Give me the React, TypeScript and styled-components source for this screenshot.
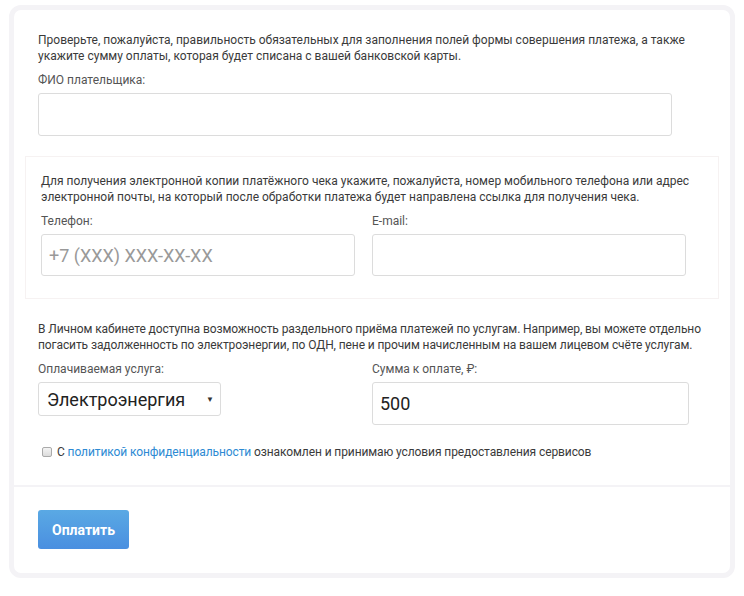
import React from "react";
import styled, { createGlobalStyle } from "styled-components";

const Global = createGlobalStyle`
  html, body { margin: 0; padding: 0; background: #ffffff; }
  body { font-family: Roboto, "Noto Sans", Arial, sans-serif; color: #333; }
  * { box-sizing: border-box; }
`;

const Card = styled.div`
  margin: 5px 9px 0 9px;
  width: 726px;
  height: 573px;
  border: 5px solid #f4f3f6;
  border-radius: 12px;
  background: #fff;
  display: flex;
  flex-direction: column;
`;

const Body = styled.div`
  padding: 22px 11px 0 11px;
  display: flex;
  flex-direction: column;
`;

const Section = styled.div`
  padding: 0 13px;
`;

const Box = styled.div`
  margin-top: 20px;
  border: 1px solid #f6f2f2;
  padding: 16px 31px 22px 15px;
`;

const Text = styled.p<{ $top?: number; $tight?: boolean }>`
  margin: ${(p) => p.$top ?? 0}px 0 0 0;
  font-size: 12px;
  line-height: 16px;
  color: #3a3a3a;
  white-space: nowrap;
  letter-spacing: ${(p) => (p.$tight ? "-0.1px" : "0")};
`;

const Label = styled.div`
  font-size: 12px;
  line-height: 16px;
  color: #555;
  margin-top: 8px;
  margin-bottom: 5px;
`;

const Input = styled.div<{ $w: number; $h?: number }>`
  width: ${(p) => p.$w}px;
  height: ${(p) => p.$h ?? 42}px;
  border: 1px solid #dcdcdc;
  border-radius: 3px;
  background: #fff;
  display: flex;
  align-items: center;
  padding: 0 7px;
  font-size: 18px;
`;

const Placeholder = styled.span`
  color: #999;
  font-size: 18px;
`;

const Value = styled.span`
  color: #222;
  font-size: 18px;
`;

const Row = styled.div`
  display: flex;
`;

const Col = styled.div<{ $w: number }>`
  width: ${(p) => p.$w}px;
  display: flex;
  flex-direction: column;
`;

const Select = styled.div`
  width: 183px;
  height: 34px;
  border: 1px solid #dcdcdc;
  border-radius: 3px;
  display: flex;
  align-items: center;
  justify-content: space-between;
  padding: 0 6px 0 8px;
  font-size: 18px;
  color: #222;
`;

const Arrow = styled.span`
  font-size: 8px;
  color: #333;
`;

const CheckRow = styled.label`
  display: flex;
  align-items: center;
  gap: 5px;
  margin-top: 20px;
  padding-left: 4px;
  font-size: 12px;
  color: #3a3a3a;
  letter-spacing: -0.1px;
`;

const Check = styled.span`
  width: 10px;
  height: 10px;
  border: 1px solid #aaa;
  border-radius: 2px;
  background: linear-gradient(#f4f4f4, #dcdcdc);
`;

const Link = styled.a`
  color: #2d8ad3;
  text-decoration: none;
`;

const Divider = styled.div`
  margin-top: 26px;
  border-top: 2px solid #f4f3f6;
`;

const Footer = styled.div`
  padding: 23px 24px;
`;

const Button = styled.button`
  width: 91px;
  height: 39px;
  border: none;
  border-radius: 3px;
  background: linear-gradient(#5aa9e4, #4a8fe0);
  color: #fff;
  font-family: Roboto, Arial, sans-serif;
  font-weight: 700;
  font-size: 14px;
`;

export default function App() {
  return (
    <>
      <Global />
      <Card>
        <Body>
          <Section>
            <Text>
              Проверьте, пожалуйста, правильность обязательных для заполнения полей формы совершения платежа, а также
              <br />
              укажите сумму оплаты, которая будет списана с вашей банковской карты.
            </Text>
            <Label>ФИО плательщика:</Label>
            <Input $w={634} $h={43} />
          </Section>
          <Box>
            <Text>
              Для получения электронной копии платёжного чека укажите, пожалуйста, номер мобильного телефона или адрес
              <br />
              электронной почты, на который после обработки платежа будет направлена ссылка для получения чека.
            </Text>
            <Row>
              <Col $w={331}>
                <Label>Телефон:</Label>
                <Input $w={314}>
                  <Placeholder>+7 (XXX) XXX-XX-XX</Placeholder>
                </Input>
              </Col>
              <Col $w={314}>
                <Label>E-mail:</Label>
                <Input $w={314} />
              </Col>
            </Row>
          </Box>
          <Section>
            <Text $top={22} $tight>
              В Личном кабинете доступна возможность раздельного приёма платежей по услугам. Например, вы можете отдельно
              <br />
              погасить задолженность по электроэнергии, по ОДН, пене и прочим начисленным на вашем лицевом счёте услугам.
            </Text>
            <Row>
              <Col $w={334}>
                <Label>Оплачиваемая услуга:</Label>
                <Select>
                  <span>Электроэнергия</span>
                  <Arrow>▼</Arrow>
                </Select>
              </Col>
              <Col $w={317}>
                <Label>Сумма к оплате, ₽:</Label>
                <Input $w={317} $h={43}>
                  <Value>500</Value>
                </Input>
              </Col>
            </Row>
            <CheckRow>
              <Check />
              <span>
                С <Link>политикой конфиденциальности</Link> ознакомлен и принимаю условия предоставления сервисов
              </span>
            </CheckRow>
          </Section>
        </Body>
        <Divider />
        <Footer>
          <Button>Оплатить</Button>
        </Footer>
      </Card>
    </>
  );
}
